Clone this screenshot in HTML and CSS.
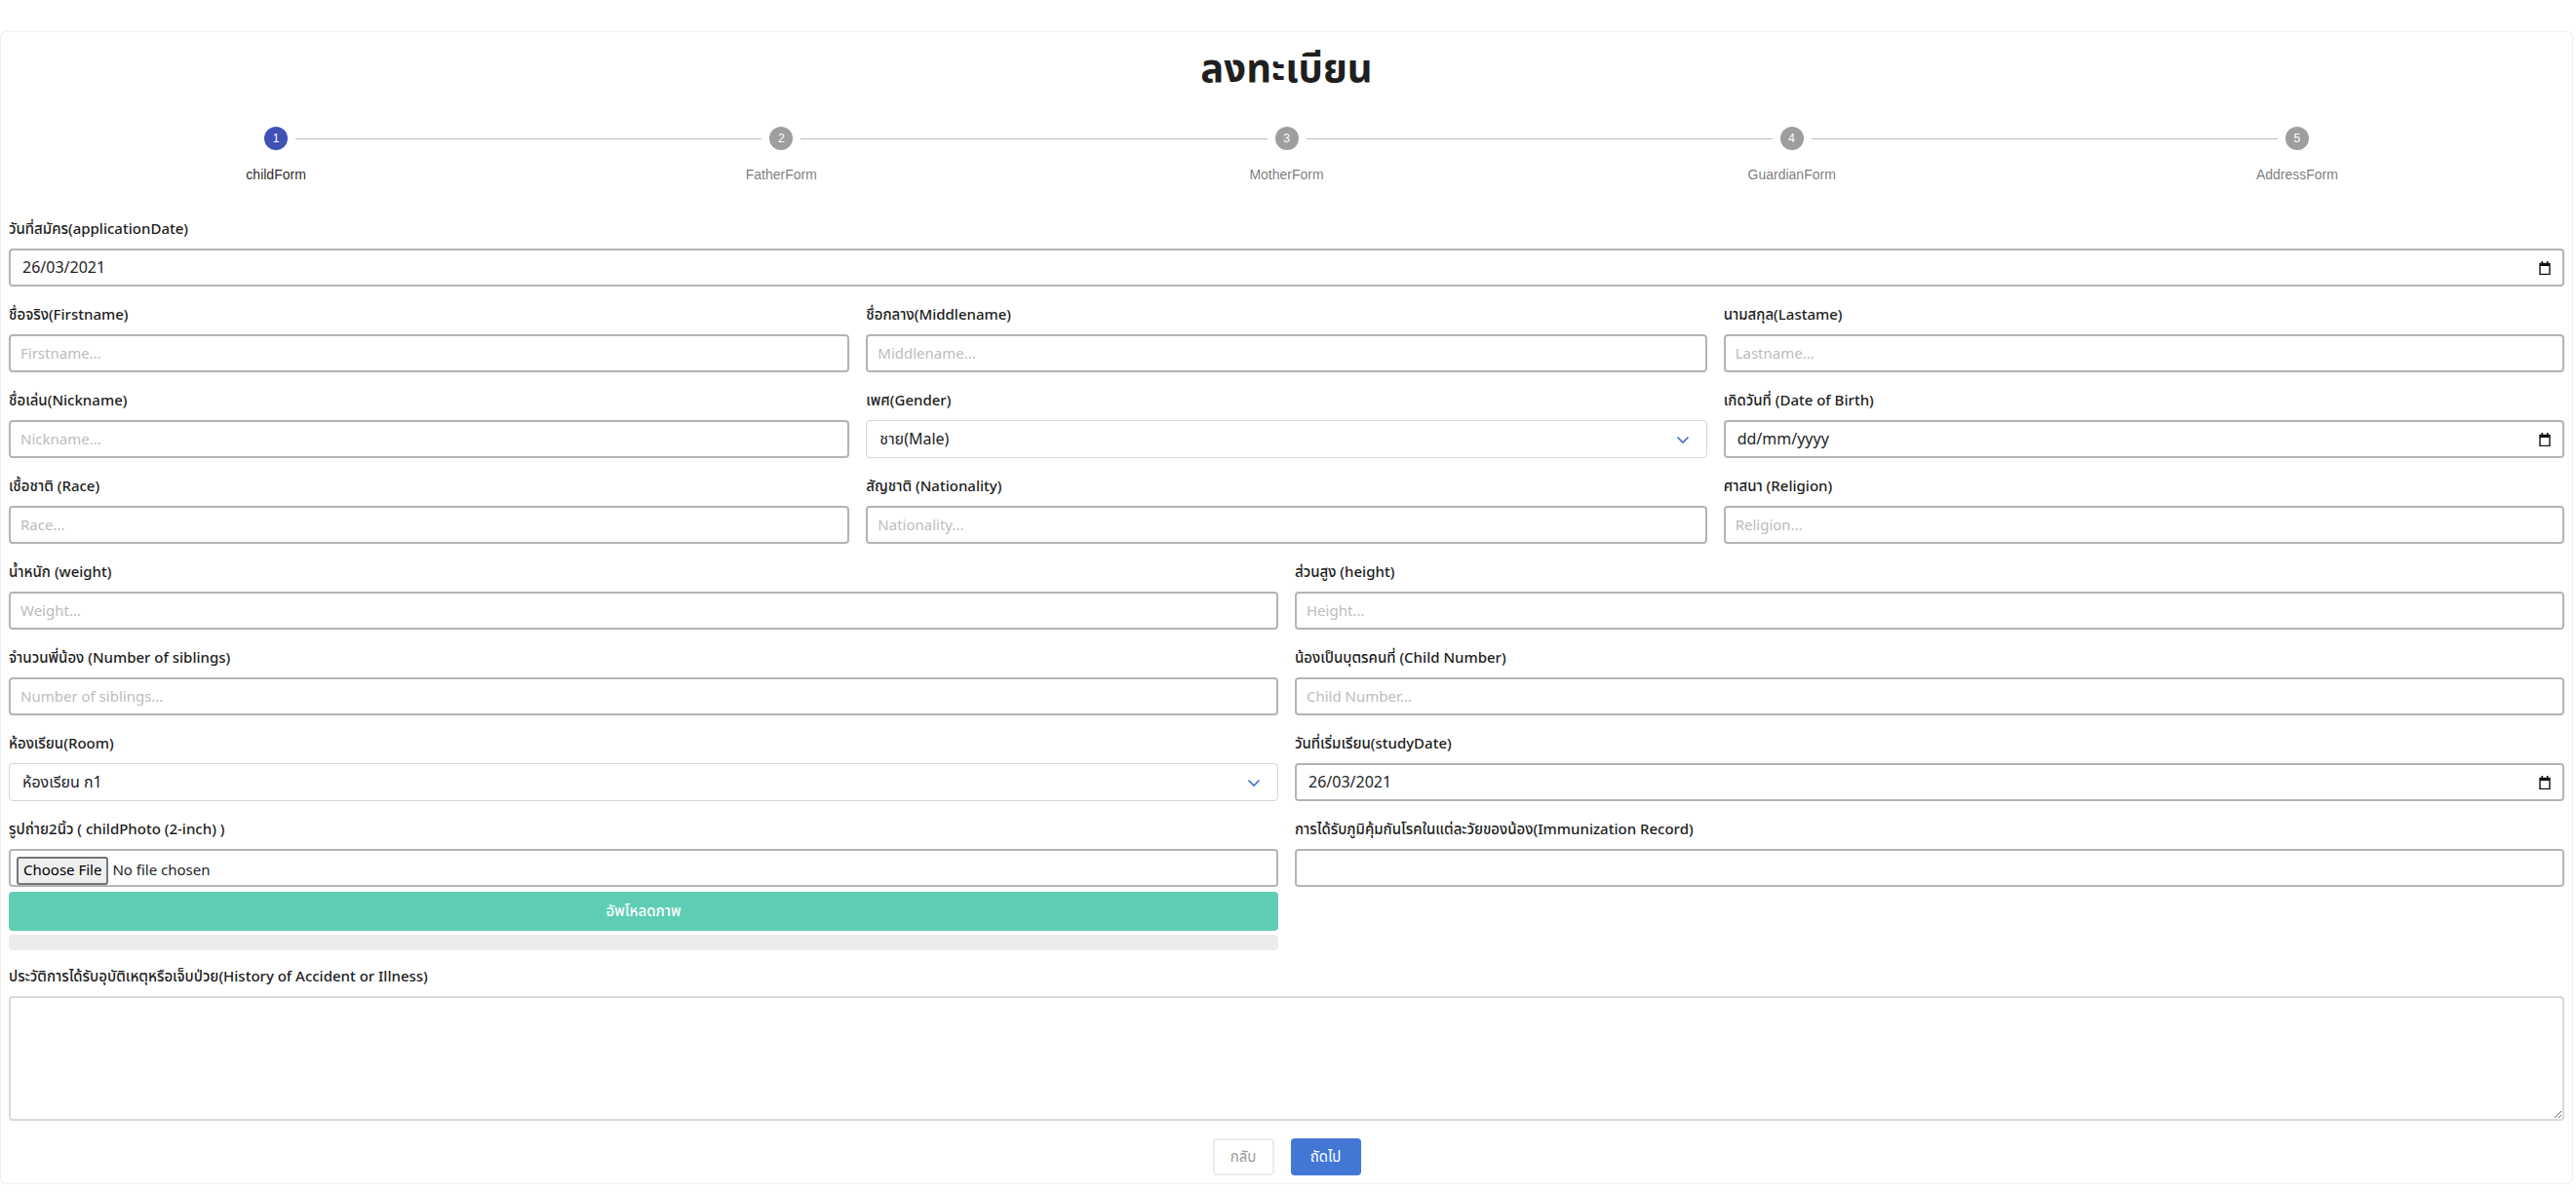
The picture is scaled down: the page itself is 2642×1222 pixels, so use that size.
FILE: index.html
```html
<!DOCTYPE html>
<html lang="th">
<head>
<meta charset="utf-8">
<title>ลงทะเบียน</title>
<link rel="stylesheet" href="styles.css">
</head>
<body>
<div class="card">
  <h1 class="title">ลงทะเบียน</h1>

  <div class="stepper">
    <div class="step active first">
      <div class="track"><span class="seg"></span><span class="icon">1</span><span class="seg"></span></div>
      <div class="step-label">childForm</div>
    </div>
    <div class="step">
      <div class="track"><span class="seg"></span><span class="icon">2</span><span class="seg"></span></div>
      <div class="step-label">FatherForm</div>
    </div>
    <div class="step">
      <div class="track"><span class="seg"></span><span class="icon">3</span><span class="seg"></span></div>
      <div class="step-label">MotherForm</div>
    </div>
    <div class="step">
      <div class="track"><span class="seg"></span><span class="icon">4</span><span class="seg"></span></div>
      <div class="step-label">GuardianForm</div>
    </div>
    <div class="step last">
      <div class="track"><span class="seg"></span><span class="icon">5</span><span class="seg"></span></div>
      <div class="step-label">AddressForm</div>
    </div>
  </div>

  <form class="form">
    <div class="group">
      <label class="label">วันที่สมัคร(applicationDate)</label>
      <div class="field date">
        <input class="bare" type="text" value="26/03/2021">
        <svg class="cal" width="12" height="14" viewBox="0 0 12 14"><rect x="1" y="2.5" width="10" height="11" fill="none" stroke="#111" stroke-width="1.4"/><rect x="1" y="2" width="10" height="3" fill="#111"/><rect x="2.5" y="0" width="1.6" height="3" fill="#111"/><rect x="7.9" y="0" width="1.6" height="3" fill="#111"/></svg>
      </div>
    </div>

    <div class="grid3">
      <div class="group">
        <label class="label">ชื่อจริง(Firstname)</label>
        <input class="field" type="text" placeholder="Firstname...">
      </div>
      <div class="group">
        <label class="label">ชื่อกลาง(Middlename)</label>
        <input class="field" type="text" placeholder="Middlename...">
      </div>
      <div class="group">
        <label class="label">นามสกุล(Lastame)</label>
        <input class="field" type="text" placeholder="Lastname...">
      </div>
    </div>

    <div class="grid3">
      <div class="group">
        <label class="label">ชื่อเล่น(Nickname)</label>
        <input class="field" type="text" placeholder="Nickname...">
      </div>
      <div class="group">
        <label class="label">เพศ(Gender)</label>
        <div class="field select">
          <select class="bare"><option>ชาย(Male)</option><option>หญิง(Female)</option></select>
          <svg class="chev" width="14" height="10" viewBox="0 0 14 10"><path d="M1.5 2.5 L7 8 L12.5 2.5" fill="none" stroke="#3d6ec9" stroke-width="1.6"/></svg>
        </div>
      </div>
      <div class="group">
        <label class="label">เกิดวันที่ (Date of Birth)</label>
        <div class="field date">
          <input class="bare" type="text" value="dd/mm/yyyy">
          <svg class="cal" width="12" height="14" viewBox="0 0 12 14"><rect x="1" y="2.5" width="10" height="11" fill="none" stroke="#111" stroke-width="1.4"/><rect x="1" y="2" width="10" height="3" fill="#111"/><rect x="2.5" y="0" width="1.6" height="3" fill="#111"/><rect x="7.9" y="0" width="1.6" height="3" fill="#111"/></svg>
        </div>
      </div>
    </div>

    <div class="grid3">
      <div class="group">
        <label class="label">เชื้อชาติ (Race)</label>
        <input class="field" type="text" placeholder="Race...">
      </div>
      <div class="group">
        <label class="label">สัญชาติ (Nationality)</label>
        <input class="field" type="text" placeholder="Nationality...">
      </div>
      <div class="group">
        <label class="label">ศาสนา (Religion)</label>
        <input class="field" type="text" placeholder="Religion...">
      </div>
    </div>

    <div class="grid2">
      <div class="group">
        <label class="label">น้ำหนัก (weight)</label>
        <input class="field" type="text" placeholder="Weight...">
      </div>
      <div class="group">
        <label class="label">ส่วนสูง (height)</label>
        <input class="field" type="text" placeholder="Height...">
      </div>
    </div>

    <div class="grid2">
      <div class="group">
        <label class="label">จำนวนพี่น้อง (Number of siblings)</label>
        <input class="field" type="text" placeholder="Number of siblings...">
      </div>
      <div class="group">
        <label class="label">น้องเป็นบุตรคนที่ (Child Number)</label>
        <input class="field" type="text" placeholder="Child Number...">
      </div>
    </div>

    <div class="grid2">
      <div class="group">
        <label class="label">ห้องเรียน(Room)</label>
        <div class="field select">
          <select class="bare"><option>ห้องเรียน ก1</option><option>ห้องเรียน ก2</option></select>
          <svg class="chev" width="14" height="10" viewBox="0 0 14 10"><path d="M1.5 2.5 L7 8 L12.5 2.5" fill="none" stroke="#3d6ec9" stroke-width="1.6"/></svg>
        </div>
      </div>
      <div class="group">
        <label class="label">วันที่เริ่มเรียน(studyDate)</label>
        <div class="field date">
          <input class="bare" type="text" value="26/03/2021">
          <svg class="cal" width="12" height="14" viewBox="0 0 12 14"><rect x="1" y="2.5" width="10" height="11" fill="none" stroke="#111" stroke-width="1.4"/><rect x="1" y="2" width="10" height="3" fill="#111"/><rect x="2.5" y="0" width="1.6" height="3" fill="#111"/><rect x="7.9" y="0" width="1.6" height="3" fill="#111"/></svg>
        </div>
      </div>
    </div>

    <div class="grid2 photo-row">
      <div class="group">
        <label class="label">รูปถ่าย2นิ้ว ( childPhoto (2-inch) )</label>
        <input class="field file" type="file">
        <button class="upload" type="button">อัพโหลดภาพ</button>
        <div class="progress"></div>
      </div>
      <div class="group">
        <label class="label">การได้รับภูมิคุ้มกันโรคในแต่ละวัยของน้อง(Immunization Record)</label>
        <input class="field" type="text">
      </div>
    </div>

    <div class="group last-group">
      <label class="label">ประวัติการได้รับอุบัติเหตุหรือเจ็บป่วย(History of Accident or Illness)</label>
      <textarea class="area"></textarea>
    </div>

    <div class="actions">
      <button class="btn back" type="button">กลับ</button>
      <button class="btn next" type="button">ถัดไป</button>
    </div>
  </form>
</div>
</body>
</html>
```

FILE: styles.css
```css
* { box-sizing: border-box; }

body {
  margin: 0;
  background: #ffffff;
  color: #212529;
  font-family: "Noto Sans Thai", "Sarabun", "Noto Sans", "DejaVu Sans", sans-serif;
}

.card {
  margin: 32px 3px 9px 0;
  padding: 0 8px 8px;
  border: 1px solid #eeeeee;
  border-radius: 6px;
  background: #fff;
}

.title {
  margin: 15px 0 10px;
  text-align: center;
  font-size: 40px;
  line-height: 48px;
  font-weight: 700;
  color: #1f1f1f;
}

/* Stepper */
.stepper {
  display: grid;
  grid-template-columns: repeat(5, 1fr);
  padding: 24px 15px;
}

.track {
  display: flex;
  align-items: center;
  height: 24px;
}

.seg {
  flex: 1;
  height: 1px;
  background: #bdbdbd;
}

.first .track .seg:first-child,
.last .track .seg:last-child {
  visibility: hidden;
}

.icon {
  width: 24px;
  height: 24px;
  margin: 0 8px;
  border-radius: 50%;
  background: #9e9e9e;
  color: #fff;
  font-family: "Liberation Sans", Arial, sans-serif;
  font-size: 12px;
  display: flex;
  align-items: center;
  justify-content: center;
}

.step.active .icon { background: #3f51b5; }

.step-label {
  margin-top: 15px;
  text-align: center;
  font-family: "Liberation Sans", Arial, sans-serif;
  font-size: 14px;
  line-height: 20px;
  color: rgba(0, 0, 0, 0.54);
}

.step.active .step-label { color: rgba(0, 0, 0, 0.87); }

/* Form */
.form { margin-top: 12px; }

.grid3 {
  display: grid;
  grid-template-columns: repeat(3, 1fr);
  column-gap: 17px;
}

.grid2 {
  display: grid;
  grid-template-columns: repeat(2, 1fr);
  column-gap: 17px;
}

.group { margin-bottom: 19px; }

.photo-row .group { margin-bottom: 17px; }

.label {
  display: block;
  margin-bottom: 9px;
  font-size: 15px;
  line-height: 21px;
  font-weight: 500;
  color: #1d1d1d;
}

.field {
  display: block;
  width: 100%;
  height: 39px;
  padding: 0 10px;
  border: 2px solid #b4b4b4;
  border-radius: 4px;
  background: #fff;
  font-family: inherit;
  font-size: 16px;
  color: #212529;
  outline: none;
}

.field::placeholder {
  color: #bcbcbc;
  font-size: 15px;
}

.field.date,
.field.select {
  display: flex;
  align-items: center;
  gap: 8px;
}

.field.date { padding-left: 12px; }

.field.select {
  border: 1px solid #d5d5d5;
  padding: 0 13px;
}

.bare {
  flex: 1;
  min-width: 0;
  height: 100%;
  border: 0;
  padding: 0;
  background: transparent;
  font-family: inherit;
  font-size: 16px;
  color: #212529;
  outline: none;
  appearance: none;
  -webkit-appearance: none;
}

.cal { flex: none; margin-right: 2px; }
.chev { flex: none; margin-right: 4px; }

.field.file {
  padding: 0 6px;
  font-size: 15px;
  display: flex;
  align-items: flex-end;
}

.field.file::file-selector-button {
  font-family: inherit;
  font-size: 15px;
  height: 29px;
  margin-top: 6px;
  padding: 0 5px;
  margin-right: 4px;
  border: 2px solid #767676;
  border-radius: 3px;
  background: #efefef;
  color: #000;
}

.upload {
  display: block;
  width: 100%;
  height: 40px;
  margin-top: 5px;
  border: 0;
  border-radius: 4px;
  background: #5ecdb4;
  color: #fff;
  font-family: inherit;
  font-size: 15px;
  font-weight: 500;
}

.progress {
  height: 16px;
  margin-top: 4px;
  border-radius: 4px;
  background: #ececec;
}

.area {
  display: block;
  width: 100%;
  height: 128px;
  border: 2px solid #d9d9d9;
  border-radius: 4px;
  resize: both;
  font-family: inherit;
  font-size: 15px;
  outline: none;
}

.last-group { margin-bottom: 18px; }

.actions {
  display: flex;
  justify-content: center;
  gap: 17px;
}

.btn {
  height: 38px;
  border-radius: 4px;
  font-family: inherit;
  font-size: 15px;
}

.btn.back {
  width: 63px;
  border: 2px solid #ececec;
  background: #fff;
  color: #999;
}

.btn.next {
  width: 72px;
  border: 0;
  background: #4277d6;
  color: #fff;
}
```
